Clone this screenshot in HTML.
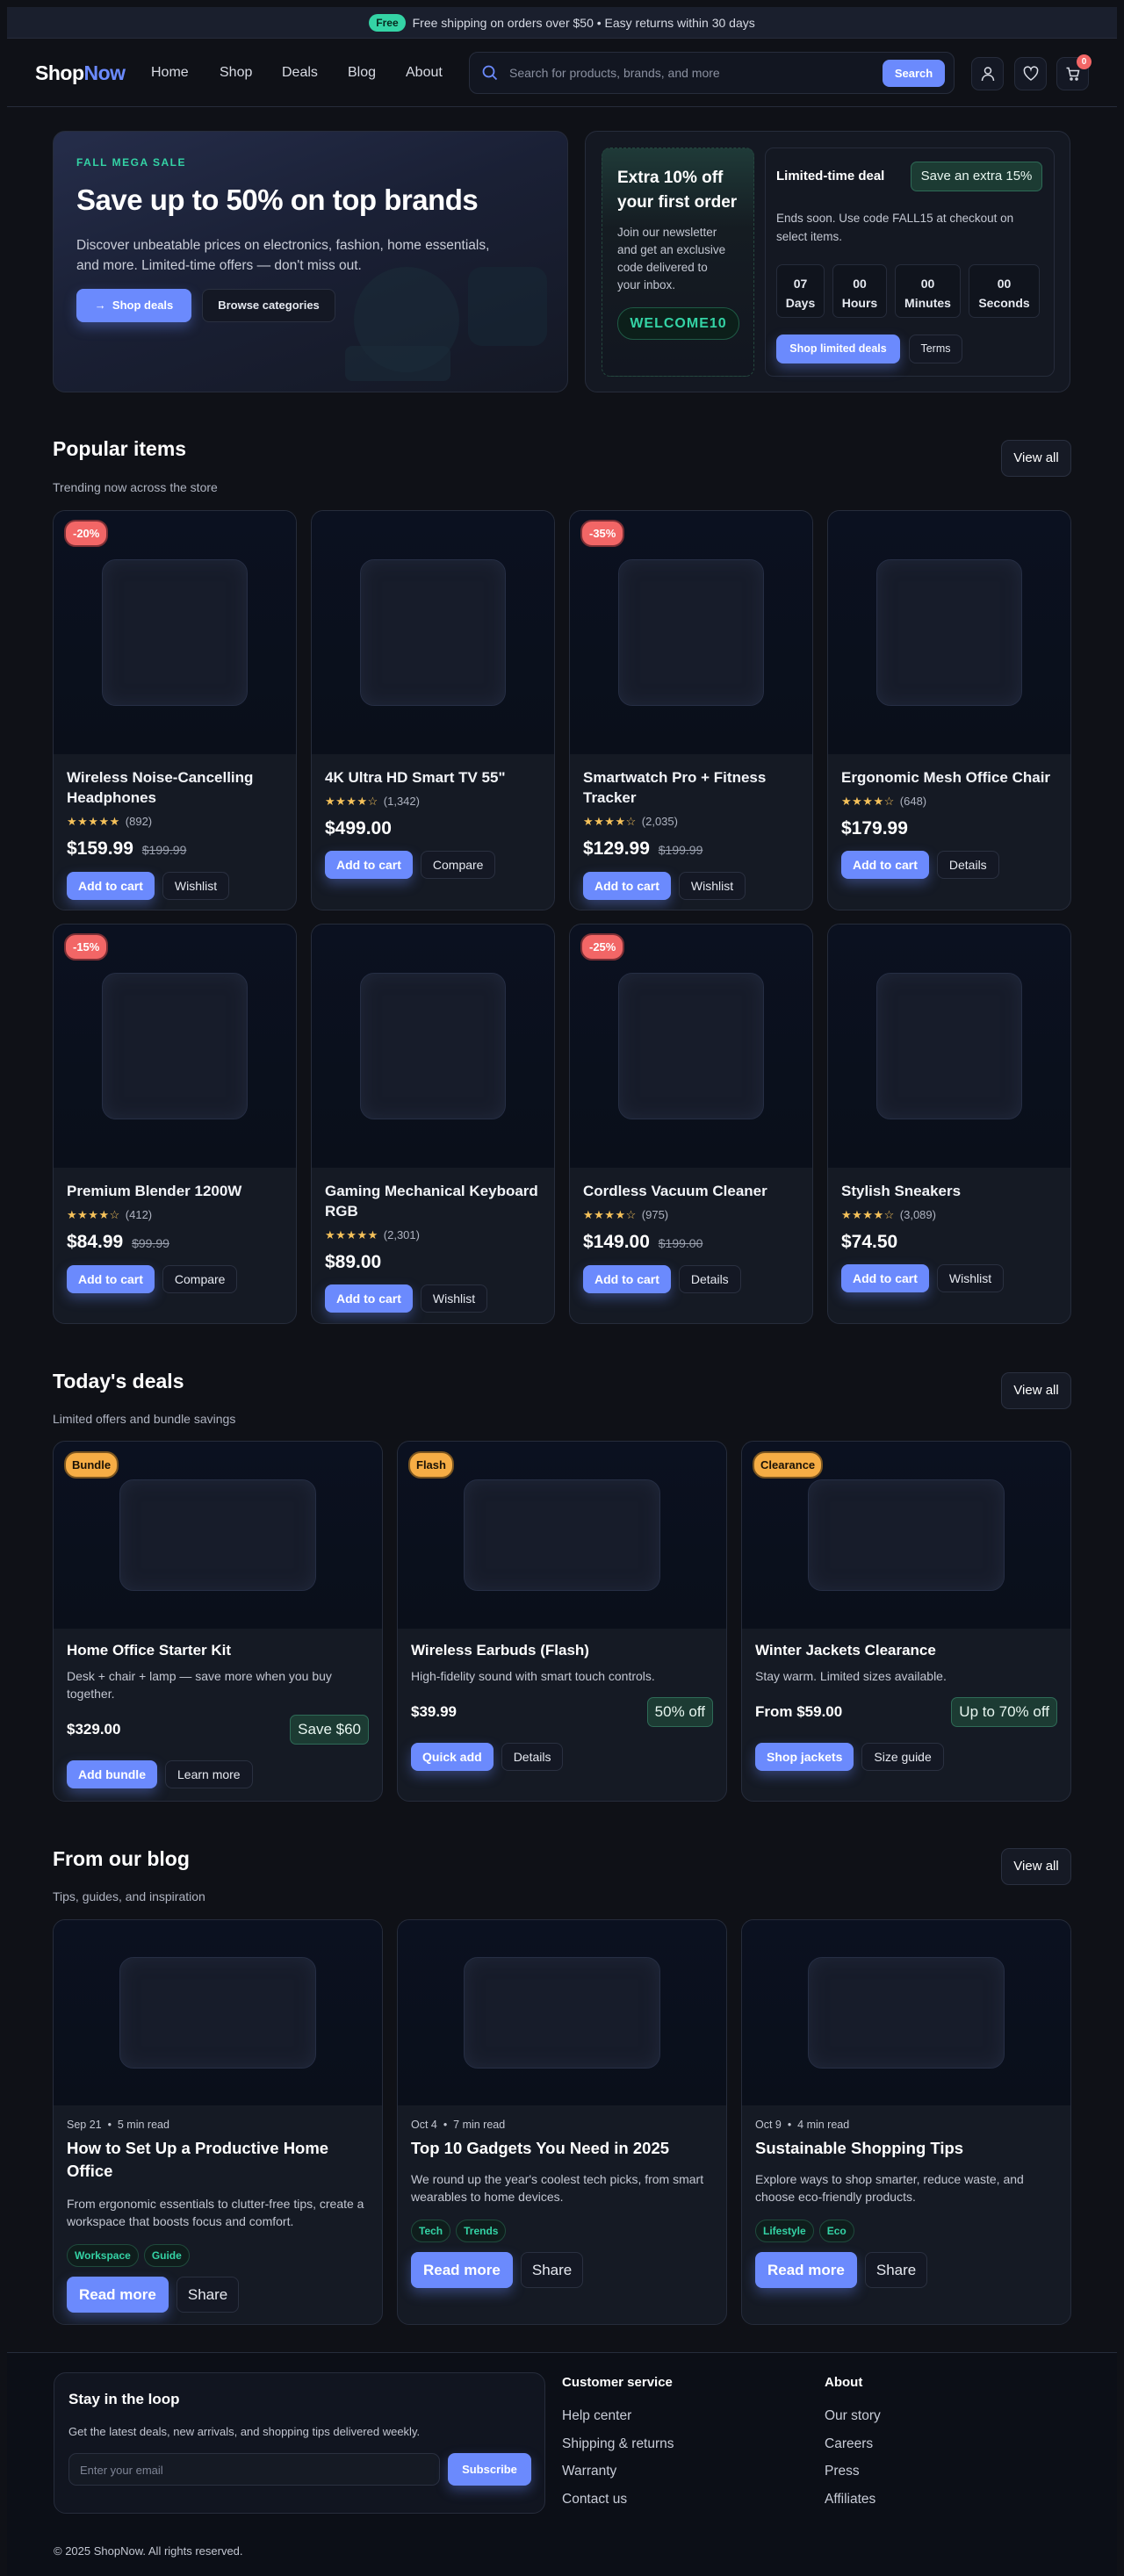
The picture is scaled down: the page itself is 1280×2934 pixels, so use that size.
<!DOCTYPE html>
<html><head><meta charset="utf-8">
<style>
*{box-sizing:border-box;margin:0;padding:0}
body{width:1280px;height:2934px;background:#0f1117;font-family:"Liberation Sans",sans-serif;color:#e6e9f0;position:relative;overflow:hidden}
.abs{position:absolute}
.topbar{left:8px;top:8px;width:1264px;height:36px;background:#1a1f2d;border-bottom:1px solid #262c3b;display:flex;align-items:center;justify-content:center;font-size:14px;color:#d5d9e3}
.pill{background:#34d3a5;color:#06281e;font-weight:700;font-size:12px;border-radius:10px;padding:3px 8px;margin-right:8px}
.nav{left:8px;top:44px;width:1264px;height:78px;border-bottom:1px solid #262c3b}
.logo{left:32px;top:26px;font-size:23px;font-weight:700;color:#fff;letter-spacing:-0.5px}
.logo span{color:#6b8afd}
.links a{position:absolute;top:30px;font-size:16px;color:#d8dbe4;text-decoration:none}
.search{left:526px;top:15px;width:553px;height:48px;background:#121621;border:1px solid #272d3c;border-radius:10px}
.sbtn{position:absolute;left:470px;top:8px;width:71px;height:31px;background:#6b8afd;border-radius:8px;color:#fff;font-weight:700;font-size:13px;text-align:center;line-height:31px}
.ib{position:absolute;top:21px;width:37px;height:38px;border:1px solid #262c3b;border-radius:9px;background:#141824;display:flex;align-items:center;justify-content:center}
.card{background:#151a24;border:1px solid #262c3b;border-radius:14px}
.btnp{display:inline-block;background:#6b8afd;color:#fff;font-weight:700;border-radius:8px;box-shadow:0 6px 14px rgba(107,138,253,.35)}
.btns{display:inline-block;background:#141824;color:#e6e9f0;border:1px solid #2a3040;border-radius:8px}
.sec-title{font-size:23px;font-weight:700;color:#fff}
.sec-sub{font-size:14px;color:#aeb3c0}
.viewall{width:80px;height:42px;border:1px solid #2a3040;background:#161a25;border-radius:9px;font-size:15px;color:#fff;text-align:center;line-height:40px}
.grid4{display:grid;grid-template-columns:repeat(4,278px);gap:16px}
.pc{position:relative;overflow:hidden}
.pimg{height:278px;background:linear-gradient(#0b1120,#0a0f1a);position:relative;border-bottom:1px solid #151a24}
.ph{position:absolute;left:20%;top:20%;width:60%;height:60%;border:1px solid #262e44;border-radius:16px;background:#171c2a;box-shadow:inset 0 0 20px rgba(40,48,70,.6)}
.badge{position:absolute;left:12px;top:10px;background:#f26666;color:#fff;font-weight:700;font-size:13px;border-radius:13px;padding:6px 8px;border:2px solid #7a2f35;z-index:2}
.pb{padding:14px 15px 14px}
.pt{font-size:17px;font-weight:700;line-height:23px;color:#f2f4f8}
.st{margin-top:8px;font-size:13px;line-height:16px;color:#f6c25a;letter-spacing:0.5px}
.st span{color:#aeb3c0;font-size:13px;letter-spacing:0;margin-left:6px}
.pr{margin-top:10px;font-size:21px;font-weight:700;line-height:26px;color:#fff}
.pr s{font-size:14px;color:#9aa0ae;font-weight:400;margin-left:4px}
.bt{margin-top:12px;display:flex;gap:9px}
.bt .btnp,.bt .btns{height:32px;line-height:30px;font-size:14px;padding:0 13px}
.bt .btnp{line-height:32px}
.grid3{display:grid;grid-template-columns:repeat(3,376px);gap:16px}
.dimg{height:213px;background:linear-gradient(#0b1120,#0a0f1a);position:relative}
.dbadge{position:absolute;left:12px;top:11px;background:#f6ad45;color:#1b1206;font-weight:700;font-size:13px;border-radius:14px;padding:6px 7px;border:2px solid #7a5520}
.db{padding:14px 15px 16px}
.dt{font-size:17px;font-weight:700;line-height:22px;color:#fff}
.dd{margin-top:8px;font-size:14px;line-height:20px;color:#c3c7d2}
.prow{display:flex;justify-content:space-between;align-items:center;margin-top:14px}
.prow b{font-size:17px;color:#fff}
.gb{background:#1c3b33;border:1px solid #2e6b57;color:#e8f6f0;border-radius:7px;font-size:17px;padding:6px 8px}
.tag{display:inline-block;border:1px solid #1f4a3c;background:#0f1d1c;color:#34d3a5;font-weight:700;font-size:12px;border-radius:13px;padding:5px 8px;margin-right:6px}
</style></head><body>

<div class="abs topbar"><span class="pill">Free</span>Free shipping on orders over $50 • Easy returns within 30 days</div>

<div class="abs nav">
 <div class="abs logo">Shop<span>Now</span></div>
 <div class="links"><a style="left:164px">Home</a><a style="left:242px">Shop</a><a style="left:313px">Deals</a><a style="left:388px">Blog</a><a style="left:454px">About</a></div>
 <div class="abs search">
  <svg class="abs" style="left:13px;top:13px" width="20" height="20" viewBox="0 0 20 20" fill="none" stroke="#6b8afd" stroke-width="1.8"><circle cx="8.5" cy="8.5" r="6"/><path d="M13 13l4.5 4.5"/></svg>
  <div style="position:absolute;left:45px;top:15px;font-size:14px;color:#8a90a0">Search for products, brands, and more</div>
  <div class="sbtn">Search</div>
 </div>
 <div class="ib" style="left:1098px"><svg width="18" height="18" viewBox="0 0 18 18" fill="none" stroke="#d8dbe4" stroke-width="1.5"><circle cx="9" cy="5.5" r="3.5"/><path d="M2.5 17c0-4 3-6.5 6.5-6.5s6.5 2.5 6.5 6.5"/></svg></div>
 <div class="ib" style="left:1147px"><svg width="18" height="18" viewBox="0 0 18 18" fill="none" stroke="#d8dbe4" stroke-width="1.5"><path d="M9 16S1.5 11 1.5 6A3.7 3.7 0 0 1 9 4a3.7 3.7 0 0 1 7.5 2C16.5 11 9 16 9 16z"/></svg></div>
 <div class="ib" style="left:1195px"><svg width="18" height="18" viewBox="0 0 18 18" fill="none" stroke="#d8dbe4" stroke-width="1.5"><path d="M1.5 2.5h2.5l2 9h8l1.5-6H5"/><circle cx="7" cy="15" r="1"/><circle cx="13" cy="15" r="1"/></svg></div>
 <div class="abs" style="left:1218px;top:18px;width:17px;height:17px;border-radius:50%;background:#f26666;color:#fff;font-size:10px;font-weight:700;text-align:center;line-height:17px">0</div>
</div>

<!-- HERO -->
<div class="abs card" style="left:60px;top:149px;width:587px;height:298px;background:linear-gradient(160deg,#252d4a 0%,#1a2035 45%,#141824 100%);overflow:hidden">
 <div class="abs" style="left:342px;top:154px;width:120px;height:120px;border-radius:50%;background:#1a2c38;opacity:.6"></div>
 <div class="abs" style="left:472px;top:154px;width:90px;height:90px;border-radius:16px;background:#182836;opacity:.6"></div>
 <div class="abs" style="left:332px;top:244px;width:120px;height:40px;border-radius:8px;background:#1a2c38;opacity:.6"></div>
 <div class="abs" style="left:26px;top:28px;font-size:12px;font-weight:700;color:#34d3a5;letter-spacing:1.5px">FALL MEGA SALE</div>
 <div class="abs" style="left:26px;top:59px;font-size:33px;font-weight:700;color:#fff;letter-spacing:-0.5px">Save up to 50% on top brands</div>
 <div class="abs" style="left:26px;top:118px;width:540px;font-size:15.5px;line-height:23px;color:#c9cdd8">Discover unbeatable prices on electronics, fashion, home essentials,<br>and more. Limited-time offers — don't miss out.</div>
 <div class="abs btnp" style="left:26px;top:179px;width:131px;height:38px;line-height:38px;font-size:13px;text-align:center">→&nbsp; Shop deals</div>
 <div class="abs btns" style="left:169px;top:179px;width:152px;height:38px;line-height:36px;font-size:13px;font-weight:700;text-align:center">Browse categories</div>
</div>

<div class="abs card" style="left:666px;top:149px;width:553px;height:298px;background:#141822">
 <div class="abs" style="left:18px;top:18px;width:174px;height:261px;border:1px dashed #24473e;border-radius:10px;background:linear-gradient(#1f3a38 0%,#151c22 35%,#121620 100%)">
  <div style="position:absolute;left:17px;top:20px;font-size:19px;font-weight:700;line-height:28px;color:#fff">Extra 10% off<br>your first order</div>
  <div style="position:absolute;left:17px;top:86px;width:150px;font-size:13.5px;line-height:20px;color:#c3c7d2">Join our newsletter<br>and get an exclusive<br>code delivered to<br>your inbox.</div>
  <div style="position:absolute;left:17px;top:181px;width:139px;height:37px;border:1px solid #1f5a45;background:#0c1f1a;border-radius:18px;color:#34d3a5;font-weight:700;font-size:16px;letter-spacing:1px;text-align:center;line-height:35px">WELCOME10</div>
 </div>
 <div class="abs" style="left:204px;top:18px;width:330px;height:261px;border:1px solid #262c3b;border-radius:10px;background:#141822">
  <div style="position:absolute;left:12px;top:23px;font-size:15px;font-weight:700;color:#fff">Limited-time deal</div>
  <div style="position:absolute;left:165px;top:15px;width:150px;height:34px;background:#1c3b33;border:1px solid #2e6b57;border-radius:7px;font-size:15px;color:#e8f6f0;text-align:center;line-height:32px">Save an extra 15%</div>
  <div style="position:absolute;left:12px;top:69px;width:310px;font-size:13.5px;line-height:21px;color:#c3c7d2">Ends soon. Use code FALL15 at checkout on<br>select items.</div>
  <div style="position:absolute;left:12px;top:132px;display:flex;gap:9px">
   <div style="width:55px;height:61px;border:1px solid #262c3b;border-radius:7px;background:#10141d;text-align:center;font-weight:700;font-size:14px;padding-top:10px;line-height:22px">07<br>Days</div>
   <div style="width:62px;height:61px;border:1px solid #262c3b;border-radius:7px;background:#10141d;text-align:center;font-weight:700;font-size:14px;padding-top:10px;line-height:22px">00<br>Hours</div>
   <div style="width:75px;height:61px;border:1px solid #262c3b;border-radius:7px;background:#10141d;text-align:center;font-weight:700;font-size:14px;padding-top:10px;line-height:22px">00<br>Minutes</div>
   <div style="width:81px;height:61px;border:1px solid #262c3b;border-radius:7px;background:#10141d;text-align:center;font-weight:700;font-size:14px;padding-top:10px;line-height:22px">00<br>Seconds</div>
  </div>
  <div class="btnp" style="position:absolute;left:12px;top:212px;width:141px;height:33px;line-height:33px;font-size:12.5px;text-align:center">Shop limited deals</div>
  <div class="btns" style="position:absolute;left:163px;top:212px;width:61px;height:33px;line-height:31px;font-size:12.5px;text-align:center">Terms</div>
 </div>
</div>

<!-- POPULAR -->
<div class="abs sec-title" style="left:60px;top:498px">Popular items</div>
<div class="abs sec-sub" style="left:60px;top:547px">Trending now across the store</div>
<div class="abs viewall" style="left:1140px;top:501px">View all</div>

<div class="abs grid4" style="left:60px;top:581px">
 <div class="card pc" style="height:456px"><div class="badge">-20%</div><div class="pimg"><div class="ph"></div></div><div class="pb"><div class="pt">Wireless Noise-Cancelling Headphones</div><div class="st">★★★★★<span>(892)</span></div><div class="pr">$159.99 <s>$199.99</s></div><div class="bt"><span class="btnp">Add to cart</span><span class="btns">Wishlist</span></div></div></div>
 <div class="card pc" style="height:456px"><div class="pimg"><div class="ph"></div></div><div class="pb"><div class="pt">4K Ultra HD Smart TV 55"</div><div class="st">★★★★☆<span>(1,342)</span></div><div class="pr">$499.00</div><div class="bt"><span class="btnp">Add to cart</span><span class="btns">Compare</span></div></div></div>
 <div class="card pc" style="height:456px"><div class="badge">-35%</div><div class="pimg"><div class="ph"></div></div><div class="pb"><div class="pt">Smartwatch Pro + Fitness Tracker</div><div class="st">★★★★☆<span>(2,035)</span></div><div class="pr">$129.99 <s>$199.99</s></div><div class="bt"><span class="btnp">Add to cart</span><span class="btns">Wishlist</span></div></div></div>
 <div class="card pc" style="height:456px"><div class="pimg"><div class="ph"></div></div><div class="pb"><div class="pt">Ergonomic Mesh Office Chair</div><div class="st">★★★★☆<span>(648)</span></div><div class="pr">$179.99</div><div class="bt"><span class="btnp">Add to cart</span><span class="btns">Details</span></div></div></div>
</div>
<div class="abs grid4" style="left:60px;top:1052px">
 <div class="card pc" style="height:456px"><div class="badge">-15%</div><div class="pimg"><div class="ph"></div></div><div class="pb"><div class="pt">Premium Blender 1200W</div><div class="st">★★★★☆<span>(412)</span></div><div class="pr">$84.99 <s>$99.99</s></div><div class="bt"><span class="btnp">Add to cart</span><span class="btns">Compare</span></div></div></div>
 <div class="card pc" style="height:456px"><div class="pimg"><div class="ph"></div></div><div class="pb"><div class="pt">Gaming Mechanical Keyboard RGB</div><div class="st">★★★★★<span>(2,301)</span></div><div class="pr">$89.00</div><div class="bt"><span class="btnp">Add to cart</span><span class="btns">Wishlist</span></div></div></div>
 <div class="card pc" style="height:456px"><div class="badge">-25%</div><div class="pimg"><div class="ph"></div></div><div class="pb"><div class="pt">Cordless Vacuum Cleaner</div><div class="st">★★★★☆<span>(975)</span></div><div class="pr">$149.00 <s>$199.00</s></div><div class="bt"><span class="btnp">Add to cart</span><span class="btns">Details</span></div></div></div>
 <div class="card pc" style="height:456px"><div class="pimg"><div class="ph"></div></div><div class="pb"><div class="pt">Stylish Sneakers</div><div class="st">★★★★☆<span>(3,089)</span></div><div class="pr">$74.50</div><div class="bt"><span class="btnp">Add to cart</span><span class="btns">Wishlist</span></div></div></div>
</div>

<!-- DEALS -->
<div class="abs sec-title" style="left:60px;top:1560px">Today's deals</div>
<div class="abs sec-sub" style="left:60px;top:1608px">Limited offers and bundle savings</div>
<div class="abs viewall" style="left:1140px;top:1563px">View all</div>
<div class="abs grid3" style="left:60px;top:1641px">
 <div class="card pc" style="height:411px"><div class="dimg"><div class="dbadge">Bundle</div><div class="ph"></div></div><div class="db"><div class="dt">Home Office Starter Kit</div><div class="dd">Desk + chair + lamp — save more when you buy together.</div><div class="prow"><b>$329.00</b><span class="gb">Save $60</span></div><div class="bt" style="margin-top:18px"><span class="btnp">Add bundle</span><span class="btns">Learn more</span></div></div></div>
 <div class="card pc" style="height:411px"><div class="dimg"><div class="dbadge">Flash</div><div class="ph"></div></div><div class="db"><div class="dt">Wireless Earbuds (Flash)</div><div class="dd">High-fidelity sound with smart touch controls.</div><div class="prow"><b>$39.99</b><span class="gb">50% off</span></div><div class="bt" style="margin-top:18px"><span class="btnp">Quick add</span><span class="btns">Details</span></div></div></div>
 <div class="card pc" style="height:411px"><div class="dimg"><div class="dbadge">Clearance</div><div class="ph"></div></div><div class="db"><div class="dt">Winter Jackets Clearance</div><div class="dd">Stay warm. Limited sizes available.</div><div class="prow"><b>From $59.00</b><span class="gb">Up to 70% off</span></div><div class="bt" style="margin-top:18px"><span class="btnp">Shop jackets</span><span class="btns">Size guide</span></div></div></div>
</div>

<!-- BLOG -->
<div class="abs sec-title" style="left:60px;top:2104px">From our blog</div>
<div class="abs sec-sub" style="left:60px;top:2152px">Tips, guides, and inspiration</div>
<div class="abs viewall" style="left:1140px;top:2105px">View all</div>
<div class="abs grid3" style="left:60px;top:2186px">
 <div class="card pc" style="height:462px"><div class="dimg" style="height:211px"><div class="ph"></div></div><div class="db"><div style="font-size:12.5px;color:#c3c7d2;line-height:16px">Sep 21 &nbsp;•&nbsp; 5 min read</div><div style="margin-top:6px;font-size:18.5px;font-weight:700;line-height:26px;color:#fff">How to Set Up a Productive Home Office</div><div class="dd" style="margin-top:14px">From ergonomic essentials to clutter-free tips, create a workspace that boosts focus and comfort.</div><div style="margin-top:16px"><span class="tag">Workspace</span><span class="tag">Guide</span></div><div class="bt" style="margin-top:11px"><span class="btnp" style="height:41px;line-height:41px;font-size:17px;padding:0 14px">Read more</span><span class="btns" style="height:41px;line-height:39px;font-size:17px;padding:0 12px">Share</span></div></div></div>
 <div class="card pc" style="height:462px"><div class="dimg" style="height:211px"><div class="ph"></div></div><div class="db"><div style="font-size:12.5px;color:#c3c7d2;line-height:16px">Oct 4 &nbsp;•&nbsp; 7 min read</div><div style="margin-top:6px;font-size:18.5px;font-weight:700;line-height:26px;color:#fff">Top 10 Gadgets You Need in 2025</div><div class="dd" style="margin-top:12px">We round up the year's coolest tech picks, from smart wearables to home devices.</div><div style="margin-top:16px"><span class="tag">Tech</span><span class="tag">Trends</span></div><div class="bt" style="margin-top:11px"><span class="btnp" style="height:41px;line-height:41px;font-size:17px;padding:0 14px">Read more</span><span class="btns" style="height:41px;line-height:39px;font-size:17px;padding:0 12px">Share</span></div></div></div>
 <div class="card pc" style="height:462px"><div class="dimg" style="height:211px"><div class="ph"></div></div><div class="db"><div style="font-size:12.5px;color:#c3c7d2;line-height:16px">Oct 9 &nbsp;•&nbsp; 4 min read</div><div style="margin-top:6px;font-size:18.5px;font-weight:700;line-height:26px;color:#fff">Sustainable Shopping Tips</div><div class="dd" style="margin-top:12px">Explore ways to shop smarter, reduce waste, and choose eco-friendly products.</div><div style="margin-top:16px"><span class="tag">Lifestyle</span><span class="tag">Eco</span></div><div class="bt" style="margin-top:11px"><span class="btnp" style="height:41px;line-height:41px;font-size:17px;padding:0 14px">Read more</span><span class="btns" style="height:41px;line-height:39px;font-size:17px;padding:0 12px">Share</span></div></div></div>
</div>

<!-- FOOTER -->
<div class="abs" style="left:8px;top:2679px;width:1264px;height:255px;background:#0c0f17;border-top:1px solid #262c3b">
 <div class="abs card" style="left:53px;top:22px;width:560px;height:161px;background:#111520">
  <div class="abs" style="left:16px;top:20px;font-size:17px;font-weight:700;color:#fff">Stay in the loop</div>
  <div class="abs" style="left:16px;top:59px;font-size:13px;color:#c3c7d2">Get the latest deals, new arrivals, and shopping tips delivered weekly.</div>
  <div class="abs" style="left:16px;top:91px;width:423px;height:37px;border:1px solid #2a3040;border-radius:9px;background:#151a24;font-size:13px;color:#7d8394;padding:11px 12px">Enter your email</div>
  <div class="abs btnp" style="left:448px;top:91px;width:95px;height:37px;line-height:37px;font-size:13px;text-align:center">Subscribe</div>
 </div>
 <div class="abs" style="left:632px;top:25px;font-size:15px;font-weight:700;color:#fff">Customer service</div>
 <div class="abs" style="left:632px;top:56px;font-size:15.5px;line-height:31.5px;color:#c9cdd8">Help center<br>Shipping &amp; returns<br>Warranty<br>Contact us</div>
 <div class="abs" style="left:931px;top:25px;font-size:15px;font-weight:700;color:#fff">About</div>
 <div class="abs" style="left:931px;top:56px;font-size:15.5px;line-height:31.5px;color:#c9cdd8">Our story<br>Careers<br>Press<br>Affiliates</div>
 <div class="abs" style="left:53px;top:218px;font-size:13px;color:#c3c7d2">© 2025 ShopNow. All rights reserved.</div>
</div>
</body></html>
